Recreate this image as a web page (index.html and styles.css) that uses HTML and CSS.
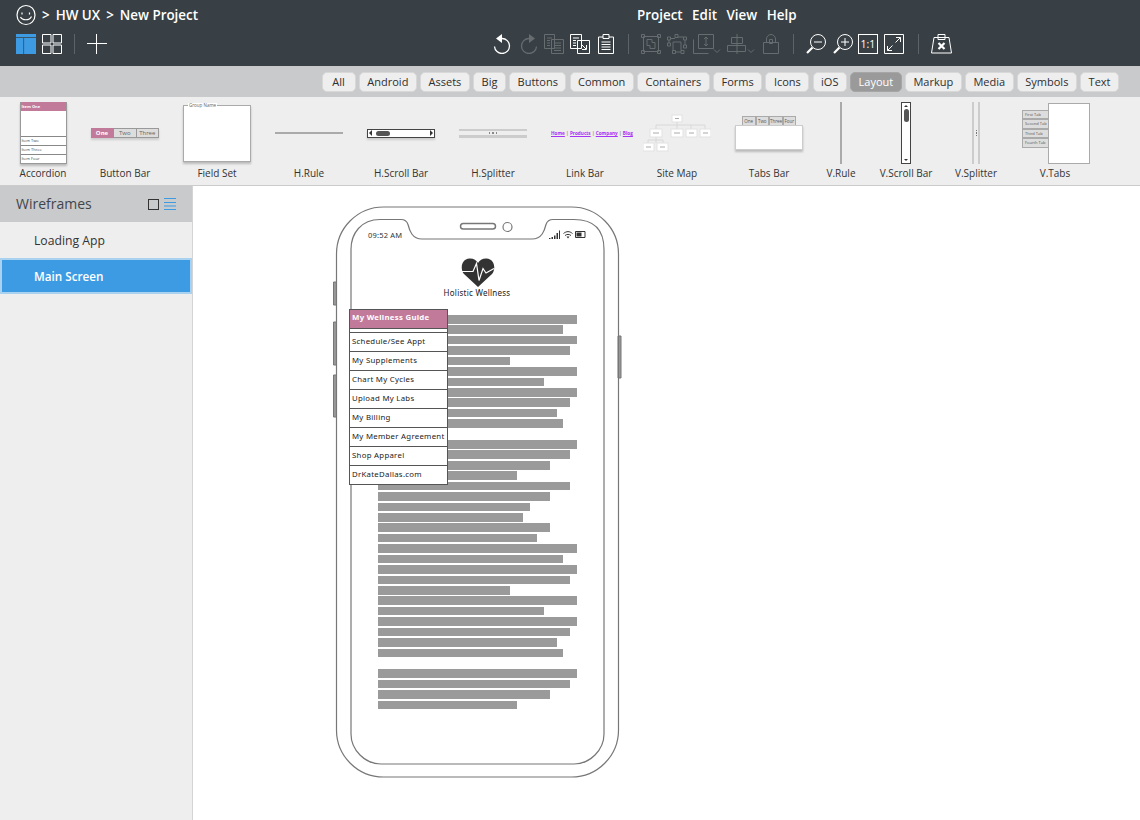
FILE: index.html
```html
<!DOCTYPE html>
<html lang="en">
<head>
<meta charset="utf-8">
<title>HW UX - New Project</title>
<link rel="stylesheet" href="styles.css">
</head>
<body>
<header class="topbar">
  <div class="row-top">
    <nav class="crumbs">
      <svg class="smiley" viewBox="0 0 20 22" width="20" height="22"><path d="M10 1.500c5 0 9 4 9 9.500s-4 9.500-9 9.500-9-4-9-9.500 4-9.500 9-9.500z"/><path d="M6 8.500v2M13.500 8.500v2"/><path d="M4.500 13c1.500 3.500 9 4 11-.5"/></svg>
      <span class="crumb">&gt;</span><span class="crumb">HW UX</span><span class="crumb">&gt;</span><span class="crumb">New Project</span>
    </nav>
    <nav class="menu"><span>Project</span><span>Edit</span><span>View</span><span>Help</span></nav>
  </div>
  <div class="row-tools">
    <div class="view-tools">
      <svg class="layout-icon" viewBox="0 0 20 20" width="20" height="20"><path d="M0 0h20v3.300H0zM0 4h7.400v16H0zM8.100 4H20v16H8.100z"/></svg>
      <svg class="icon" viewBox="0 0 20 20" width="20" height="20"><path d="M.5.500h8.500v8.500H.5zM11 .5h8.500v8.500H11zM.5 11h8.500v8.500H.5zM11 11h8.500v8.500H11z"/></svg>
      <i class="sep sep-a"></i>
      <svg class="icon plus" viewBox="0 0 20 20" width="20" height="20"><path d="M0 9.500h20M9.500 0v20"/></svg>
    </div>
    <div class="tools">
      <svg class="icon" viewBox="0 0 18 20" width="18" height="20"><path d="M9 4.500a7.500 7.500 0 1 1-7.500 8" stroke-width="1.300"/><path class="solid" d="M3 4.500 9 0v9z"/></svg>
      <svg class="icon dim t1" viewBox="0 0 18 20" width="18" height="20"><path d="M9 4.500a7.500 7.500 0 1 0 7.500 8" stroke-width="1.300"/><path class="solid" d="M15 4.500 9 0v9z"/></svg>
      <svg class="icon dim" viewBox="0 0 20 20" width="20" height="20"><path d="M.5.500h10v14H.5zM7.500 5.500h12v14h-12zM3 4h5M3 6.500h3M3 9h3M3 11.500h3M10 9h7M10 11.500h7M10 14h7M10 16.500h7"/></svg>
      <svg class="icon" viewBox="0 0 20 20" width="20" height="20"><path d="M.5.500h11v14H.5zM7.500 6.500h12v13h-12zM3 4h6M3 6.500h3M3 9h3M3 11.500h3M11 10l5 5M16.500 11v4.500h-4.500"/></svg>
      <svg class="icon t2" viewBox="0 0 16 20" width="16" height="20"><path d="M5 3H.5v16.500h15V3H11M5 .5h6v4H5zM3.500 8h9M3.500 10.500h9M3.500 13h9M3.500 15.500h9"/></svg>
      <i class="sep sep-b"></i>
      <svg class="icon dim" viewBox="0 0 20 20" width="20" height="20"><path d="M2.500 2.500h15v15h-15zM.5.500h3v3h-3zM16.500.5h3v3h-3zM.5 16.500h3v3h-3zM16.500 16.500h3v3h-3zM6 5.500h5v3h3v6H9v-3H6z"/></svg>
      <svg class="icon dim" viewBox="0 0 20 20" width="20" height="20"><path d="M.5 3h3v3h-3zM8 .5h3v3H8zM16.500 3h3v3h-3zM.5 9h3v3h-3zM5.500 16.500h3v3h-3zM14 16.500h3v3h-3zM16.500 11h3v3h-3zM3.500 4.500H8M11 3h5.500M2 6v3M6 8h8v8.500M6 8v8.500M8.500 18h5.500M18 6v5"/></svg>
      <svg class="icon dim" viewBox="0 0 28 20" width="28" height="20"><path d="M5.500 14.500V.5h15v14zM.5 5.500v14h15M13 3v9M11 5l2-2 2 2M11 10l2 2 2-2M21 15.500l3 3 3-3"/></svg>
      <svg class="icon dim" viewBox="0 0 28 20" width="28" height="20"><path d="M10 0v20M4.500 3.500h11v6h-11zM.5 11.500h18v6H.5zM21 15.500l3 3 3-3"/></svg>
      <svg class="icon dim t2" viewBox="0 0 16 20" width="16" height="20"><path d="M.5 8.500h15v11H.5zM3.500 8.500V5a4.500 4.500 0 0 1 9 0v3.500M6.500 5.500h3v4h-3z"/></svg>
      <i class="sep sep-b"></i>
      <svg class="icon lens" viewBox="0 0 20 20" width="20" height="20"><circle cx="12" cy="8" r="7.500"/><path d="M8 8h8"/><path class="thick" d="M6.500 13.500 1 19"/></svg>
      <svg class="icon" viewBox="0 0 22 20" width="22" height="20"><circle cx="13" cy="8" r="7.500"/><path d="M9 8h8M13 4v8"/><path class="thick" d="M7.500 13.500 2 19"/></svg>
      <span class="ratio">1:1</span>
      <svg class="icon" viewBox="0 0 20 20" width="20" height="20"><path d="M.5.500h19v19H.5zM12 3.500h4.500V8M16.500 3.500l-5 5M8 16.500H3.500V12M3.500 16.500l5-5"/></svg>
      <i class="sep sep-b"></i>
      <svg class="icon" viewBox="0 0 21 20" width="21" height="20"><path d="M3 3.500h15l2.500 15.500H.5zM7 .5h7v5H7z"/><path class="thick" d="M7.500 9l6 6M13.500 9l-6 6"/></svg>
    </div>
  </div>
</header>

<div class="filters">
  <span class="pill pill-all">All</span><span class="pill">Android</span><span class="pill">Assets</span><span class="pill">Big</span><span class="pill">Buttons</span><span class="pill">Common</span><span class="pill">Containers</span><span class="pill">Forms</span><span class="pill">Icons</span><span class="pill">iOS</span><span class="pill active">Layout</span><span class="pill">Markup</span><span class="pill">Media</span><span class="pill">Symbols</span><span class="pill">Text</span>
</div>

<section class="library">
  <figure class="item w72">
    <div class="thumb"><div class="accordion"><b>Item One</b><div class="acc-body"></div><span>Item Two</span><span>Item Three</span><span>Item Four</span></div></div>
    <figcaption>Accordion</figcaption>
  </figure>
  <figure class="item w92">
    <div class="thumb"><div class="btnbar"><span class="on">One</span><span>Two</span><span>Three</span></div></div>
    <figcaption>Button Bar</figcaption>
  </figure>
  <figure class="item w92">
    <div class="thumb"><div class="fieldset"><span>Group Name</span></div></div>
    <figcaption>Field Set</figcaption>
  </figure>
  <figure class="item w92">
    <div class="thumb"><div class="hrule"></div></div>
    <figcaption>H.Rule</figcaption>
  </figure>
  <figure class="item w92">
    <div class="thumb"><div class="hscroll"><i class="tri-l"></i><i class="hthumb"></i><i class="tri-r"></i></div></div>
    <figcaption>H.Scroll Bar</figcaption>
  </figure>
  <figure class="item w92">
    <div class="thumb"><div class="hsplit"><em></em><span><i></i><i></i><i></i></span><em></em></div></div>
    <figcaption>H.Splitter</figcaption>
  </figure>
  <figure class="item w92">
    <div class="thumb"><div class="linkbar"><u>Home</u> | <u>Products</u> | <u>Company</u> | <u>Blog</u></div></div>
    <figcaption>Link Bar</figcaption>
  </figure>
  <figure class="item w92">
    <div class="thumb">
      <svg class="sitemap" viewBox="0 0 68 40" width="68" height="40">
        <path d="M34 9v7M13 12h49M13 12v4M48 12v4M62 12v4M13 24v6M5 27h15M5 27v3M20 27v3"/>
        <rect x="29" y="2" width="10" height="7"/><rect x="7" y="16" width="12" height="8"/><rect x="28" y="16" width="12" height="8"/><rect x="43" y="16" width="11" height="8"/><rect x="57" y="16" width="11" height="8"/><rect x="0" y="30" width="11" height="8"/><rect x="14" y="30" width="11" height="8"/>
        <path class="node-text" d="M32 5.500h4M10 20h6M31 20h6M46 20h5M60 20h5M3 34h5M17 34h5"/>
      </svg>
    </div>
    <figcaption>Site Map</figcaption>
  </figure>
  <figure class="item w92">
    <div class="thumb"><div class="tabsbar"><div class="tabs"><span>One</span><span>Two</span><span>Three</span><span>Four</span></div><div class="tabs-body"></div></div></div>
    <figcaption>Tabs Bar</figcaption>
  </figure>
  <figure class="item w52">
    <div class="thumb"><div class="vrule"></div></div>
    <figcaption>V.Rule</figcaption>
  </figure>
  <figure class="item w78">
    <div class="thumb"><div class="vscroll"><i class="tri-u"></i><i class="vthumb"></i><i class="tri-d"></i></div></div>
    <figcaption>V.Scroll Bar</figcaption>
  </figure>
  <figure class="item w62">
    <div class="thumb"><div class="vsplit"><em></em><span><i></i><i></i><i></i></span><em></em></div></div>
    <figcaption>V.Splitter</figcaption>
  </figure>
  <figure class="item w96">
    <div class="thumb"><div class="vtabs"><div class="vtab-list"><span>First Tab</span><span>Second Tab</span><span>Third Tab</span><span>Fourth Tab</span></div><div class="vtab-body"></div></div></div>
    <figcaption>V.Tabs</figcaption>
  </figure>
</section>

<div class="workspace">
  <aside class="sidebar">
    <div class="side-head">
      <span>Wireframes</span>
      <span class="side-icons">
        <i class="sq"></i>
        <svg viewBox="0 0 12 12" width="12" height="12" class="lines"><path d="M0 .5h12M0 4.500h12M0 8h12M0 11.500h12"/></svg>
      </span>
    </div>
    <div class="side-item">Loading App</div>
    <div class="side-item selected">Main Screen</div>
  </aside>

  <main class="canvas">
    <div class="phone">
      <svg class="phone-frame" viewBox="0 0 290 576" width="290" height="576">
        <path class="btn" d="M.5 76h3v23h-3zM.5 116h3v43h-3zM.5 169h3v42h-3zM285 130h3v42h-3z"/>
        <rect x="3.500" y="1" width="282" height="570" rx="47"/>
        <path d="M47 13.500h21c4 0 6 2 7 5 1.500 6 4 14.500 14 14.500h110c10 0 12.500-8.500 14-14.500 1-3 3-5 7-5h21c24 0 30 14 30 30V528c0 16-14 30-30 30H48c-16 0-30-14-30-30V43.500c0-16 10-30 29-30z"/>
        <rect class="speaker" x="127.500" y="17.500" width="35" height="5.500" rx="2.750"/>
        <circle cx="174.500" cy="21" r="4.500"/>
      </svg>
      <span class="clock">09:52 AM</span>
      <svg class="status" viewBox="0 0 38 9" width="38" height="9">
        <path class="fill-dark" d="M0 8h1.500v1H0zM2.500 7H4v2H2.500zM5 5.500h1.500V9H5zM7.500 3H9v6H7.500zM10 .5h1V9h-1z"/>
        <path class="wifi" d="M14.500 3.500c3-2.500 6-2.500 9 0M16 5.500c2-1.500 4-1.500 6 0"/><path class="fill-dark" d="M17.500 6.500h3L19 8.500z"/>
        <path class="wifi" d="M26.500 1.500h9.500v6h-9.500z"/><path class="fill-dark" d="M27.500 2.500h5v4h-5z"/>
      </svg>
      <svg class="heart" viewBox="0 0 34 29" width="34" height="29">
        <path class="heart-fill" d="M17 29 3 16C-1 11.500 0 1 8.500.5 12.500.3 15.500 2.500 17 5c1.500-2.500 4.500-4.700 8.500-4.500C34 1 35 11.500 31 16z"/>
        <path class="pulse" d="M0 13.500h12l3.500-8 2.500 17 4-12 3 4.500 8-4.500"/>
      </svg>
      <div class="brand">Holistic Wellness</div>

      <div class="copy">
        <i class="b199"></i><i class="b185"></i><i class="b199"></i><i class="b192"></i><i class="b132"></i><i class="b199"></i><i class="b166"></i><i class="b199"></i><i class="b192"></i><i class="b179"></i><i class="b185"></i>
        <i class="b0"></i>
        <i class="b199"></i><i class="b192"></i><i class="b172"></i><i class="b139"></i><i class="b192"></i><i class="b172"></i><i class="b152"></i><i class="b145"></i><i class="b172"></i><i class="b159"></i><i class="b199"></i><i class="b185"></i><i class="b199"></i><i class="b192"></i><i class="b132"></i><i class="b199"></i><i class="b166"></i><i class="b199"></i><i class="b192"></i><i class="b179"></i><i class="b185"></i>
        <i class="b0"></i>
        <i class="b199"></i><i class="b192"></i><i class="b172"></i><i class="b139"></i>
      </div>

      <div class="guide">
        <div class="guide-head">My Wellness Guide</div>
        <div class="guide-gap"></div>
        <div class="guide-row">Schedule/See Appt</div>
        <div class="guide-row">My Supplements</div>
        <div class="guide-row">Chart My Cycles</div>
        <div class="guide-row">Upload My Labs</div>
        <div class="guide-row">My Billing</div>
        <div class="guide-row">My Member Agreement</div>
        <div class="guide-row">Shop Apparel</div>
        <div class="guide-row">DrKateDallas.com</div>
      </div>
    </div>
  </main>
</div>
</body>
</html>
```

FILE: styles.css
```css
* { box-sizing: border-box; }
html, body { margin: 0; height: 100%; }
body {
  width: 1140px;
  height: 820px;
  overflow: hidden;
  display: flex;
  flex-direction: column;
  background: #fff;
  font-family: "Open Sans", "Liberation Sans", sans-serif;
  color: #333;
}

/* top bar */
.topbar { height: 66px; background: #394045; color: #fff; flex: none; }
.row-top { display: flex; align-items: center; height: 34px; padding: 0 0 5px 16px; }
.crumbs { display: flex; align-items: center; width: 621px; gap: 6px; font-size: 13.400px; font-weight: 600; }
.smiley { fill: none; stroke: #fff; stroke-width: 1.200; flex: none; }
.menu { display: flex; gap: 9.500px; font-size: 13.400px; font-weight: 600; }
.row-tools { display: flex; align-items: flex-start; height: 32px; padding-left: 16px; }
.view-tools { display: flex; align-items: flex-start; width: 477px; gap: 6px; }
.layout-icon { fill: #3d9be4; flex: none; }
.tools { display: flex; align-items: flex-start; gap: 6px; }
.icon { fill: none; stroke: #fff; stroke-width: 1; flex: none; }
.icon.dim { stroke: #666c70; }
.icon .solid { fill: #fff; stroke: none; }
.icon.dim .solid { fill: #666c70; }
.icon .thick { stroke-width: 2.200; }
.t1 { margin-left: 3px; }
.t2 { margin-left: 2px; }
.sep { display: block; flex: none; width: 1px; height: 20px; background: #5d6468; }
.sep-a { margin: 0 6px; }
.sep-b { margin: 0 6px 0 8px; }
.ratio {
  display: flex; align-items: center; justify-content: center;
  width: 20px; height: 20px; margin-left: -2px;
  border: 1px solid #fff; font-size: 10.500px; color: #fff;
}

/* filters */
.filters {
  flex: none; height: 31px; background: #c9cacb;
  display: flex; justify-content: flex-end; align-items: center; gap: 3.200px;
  padding: 1px 21px 0 0;
}
.pill {
  height: 20px; padding: 0 7.500px; border: 1px solid #d8d8d8; border-radius: 5px;
  background: #eee; font-size: 11px; line-height: 18px; color: #2f2f2f;
}
.pill-all { min-width: 34px; text-align: center; }
.pill.active { background: #9a9a9a; border-color: #a6a6a6; color: #fff; }

/* library */
.library {
  flex: none; height: 89px; background: #eee; border-bottom: 1px solid #ccc;
  display: flex; padding-left: 7px;
}
.item { margin: 0; display: flex; flex-direction: column; align-items: center; flex: none; }
.w52 { width: 52px; } .w62 { width: 62px; } .w72 { width: 72px; } .w78 { width: 78px; } .w92 { width: 92px; } .w96 { width: 96px; }
.thumb { height: 69px; width: 100%; display: flex; align-items: center; justify-content: center; padding-top: 3px; }
figcaption { font-size: 10px; line-height: 14px; color: #333; white-space: nowrap; }

.accordion {
  width: 47px; height: 62px; background: #fff; border: 1px solid #999; border-top: 0;
  display: flex; flex-direction: column; font-size: 4px; color: #444;
  box-shadow: 0 2px 2px #bbb;
}
.accordion b { display: block; height: 9px; background: #c27a9b; color: #fff; line-height: 9px; padding-left: 1px; font-weight: 700; }
.acc-body { flex: 1; }
.accordion span { height: 9px; line-height: 8px; border-top: 1px solid #888; padding-left: 1px; }

.btnbar { display: flex; width: 68px; height: 10px; font-size: 6px; line-height: 8px; text-align: center; color: #666; box-shadow: 0 2px 2px #ccc; }
.btnbar span { flex: 1; background: #ddd; border: 1px solid #999; border-left: 0; }
.btnbar .on { flex: none; width: 23px; background: #c27a9b; color: #fff; border-color: #c27a9b; font-weight: 700; }

.fieldset { position: relative; width: 68px; height: 57px; background: #fff; border: 1px solid #aaa; box-shadow: 0 2px 2px #bbb; }
.fieldset span { position: absolute; left: 4px; top: -3px; padding: 0 1px; font-size: 4.500px; line-height: 5px; background: #fff; color: #666; }

.hrule { width: 68px; height: 2.500px; background: #aaa; }

.hscroll { width: 68px; height: 9px; background: #fff; border: 1px solid #444; display: flex; align-items: center; padding: 0 1px; box-shadow: 0 2px 2px #ccc; }
.tri-l { border: 3px solid transparent; border-right: 3px solid #333; border-left: 0; }
.tri-r { border: 3px solid transparent; border-left: 3px solid #333; border-right: 0; margin-left: auto; }
.hthumb { width: 14px; height: 5px; margin-left: 4px; border-radius: 2.500px; background: #555; }

.hsplit { width: 68px; display: flex; flex-direction: column; }
.hsplit em { height: 2.500px; background: #ccc; }
.hsplit span { height: 4px; display: flex; align-items: center; justify-content: center; gap: 2px; }
.hsplit i { width: 1.500px; height: 1.500px; background: #888; }

.linkbar { width: 68px; font-size: 4.700px; text-align: center; color: #444; white-space: nowrap; }
.linkbar u { color: #a832f5; font-weight: 700; }

.sitemap path { fill: none; stroke: #d8d8d8; stroke-width: 1; }
.sitemap rect { fill: #fff; stroke: #e2e2e2; stroke-width: 1; }
.sitemap .node-text { stroke: #aaa; stroke-width: 1; }

.tabsbar { width: 68px; }
.tabs { display: flex; padding-left: 7px; }
.tabs span { width: 13.500px; height: 9px; background: #ddd; border: 1px solid #aaa; border-bottom: 0; font-size: 4.500px; line-height: 8px; text-align: center; color: #555; }
.tabs-body { height: 25px; background: #fff; border: 1px solid #ccc; box-shadow: 0 2px 2px #bbb; }

.vrule { width: 2px; height: 62px; background: #aaa; }

.vscroll { width: 10px; height: 62px; background: #fff; border: 1px solid #444; display: flex; flex-direction: column; align-items: center; padding: 2px 0; }
.tri-u { border: 2.500px solid transparent; border-bottom: 2.500px solid #333; border-top: 0; }
.tri-d { border: 2.500px solid transparent; border-top: 2.500px solid #333; border-bottom: 0; margin-top: auto; }
.vthumb { width: 5px; height: 13px; margin-top: 2px; border-radius: 2.500px; background: #555; }

.vsplit { display: flex; height: 62px; }
.vsplit em { width: 2.500px; background: #ccc; }
.vsplit span { width: 3.500px; display: flex; flex-direction: column; align-items: center; justify-content: center; gap: 1px; }
.vsplit i { width: 1px; height: 1.500px; background: #777; }

.vtabs { display: flex; align-items: flex-start; height: 61px; margin-left: 2px; }
.vtab-list { width: 26px; margin-top: 7px; display: flex; flex-direction: column; }
.vtab-list span { height: 9.500px; background: #ddd; border: 1px solid #aaa; border-right: 0; font-size: 4px; line-height: 8px; padding-left: 2px; color: #555; white-space: nowrap; overflow: hidden; }
.vtab-body { width: 42px; height: 61px; background: #fff; border: 1px solid #aaa; }

/* workspace */
.workspace { flex: 1; display: flex; min-height: 0; }
.sidebar { width: 193px; flex: none; background: #eee; border-right: 1px solid #d4d4d4; }
.side-head { height: 36px; background: #c9cacb; display: flex; align-items: center; justify-content: space-between; padding: 0 16px 2px; font-size: 14px; color: #3f464b; }
.side-icons { display: flex; align-items: center; gap: 5px; padding-top: 2px; }
.sq { width: 11px; height: 11px; border: 1px solid #333; display: block; }
.lines { fill: none; stroke: #3d9be4; stroke-width: 1; }
.side-item { height: 36px; line-height: 37px; padding-left: 34px; font-size: 12.200px; color: #333; }
.side-item.selected { background: #3d9be4; border: 2px solid #a8d2ef; line-height: 33px; padding-left: 32px; color: #fff; font-weight: 600; font-size: 11.700px; }

/* canvas: everything in the phone is placed freely */
.canvas { flex: 1; position: relative; background: #fff; overflow: hidden; }
.phone { position: absolute; left: 140px; top: 20px; width: 290px; height: 576px; font-family: "Noto Sans", sans-serif; }
.phone-frame { position: absolute; left: 0; top: 0; fill: none; stroke: #777; stroke-width: 1.200; }
.phone-frame .btn { fill: #999; stroke: #777; stroke-width: 1; }
.phone-frame .speaker { stroke-width: 1.500; }
.clock { position: absolute; left: 35px; top: 23px; font-size: 7.500px; line-height: 12px; letter-spacing: .2px; color: #333; }
.status { position: absolute; left: 216px; top: 24px; }
.fill-dark { fill: #333; stroke: none; }
.wifi { fill: none; stroke: #333; stroke-width: 1; }
.heart { position: absolute; left: 128px; top: 52px; }
.heart-fill { fill: #333; }
.pulse { fill: none; stroke: #fff; stroke-width: 1.200; }
.brand { position: absolute; left: 100px; width: 88px; top: 81px; text-align: center; font-size: 8px; line-height: 12px; letter-spacing: .25px; color: #222; white-space: nowrap; }

.copy { position: absolute; left: 45px; top: 109px; display: flex; flex-direction: column; gap: 1.830px; }
.copy i { display: block; height: 8.600px; background: #9a9a9a; }
.b0 { background: transparent !important; width: 1px; }
.b199 { width: 199px; } .b192 { width: 192px; } .b185 { width: 185px; } .b179 { width: 179px; } .b172 { width: 172px; } .b166 { width: 166px; } .b159 { width: 159px; } .b152 { width: 152px; } .b145 { width: 145px; } .b139 { width: 139px; } .b132 { width: 132px; }

.guide { position: absolute; left: 16px; top: 103px; width: 99px; background: #fff; border: 1px solid #555; font-size: 7.800px; letter-spacing: .28px; color: #222; }
.guide-head { height: 19px; line-height: 15px; padding-left: 2px; background: #c27a9b; color: #fff; font-weight: 700; border-bottom: 1px solid #555; }
.guide-gap { height: 3px; }
.guide-row { height: 19px; line-height: 16px; padding-left: 2px; border-top: 1px solid #555; white-space: nowrap; }
```
